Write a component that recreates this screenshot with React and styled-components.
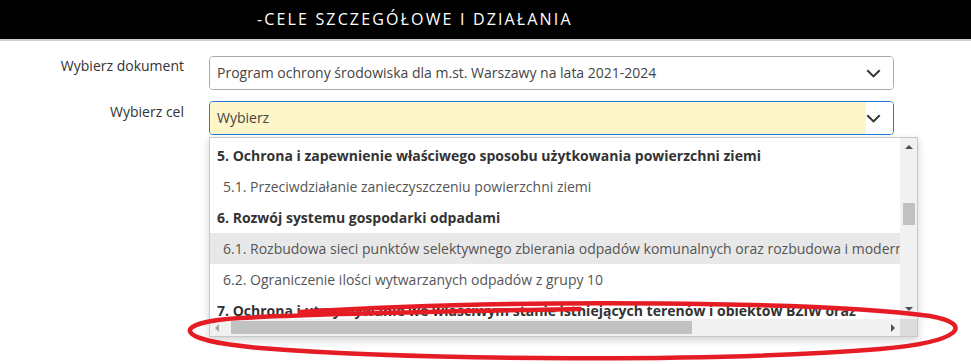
import React from 'react';
import styled, { createGlobalStyle } from 'styled-components';

const GlobalStyle = createGlobalStyle`
  body {
    margin: 0;
    background: #fff;
    font-family: "Open Sans", "DejaVu Sans", sans-serif;
  }
`;

const Page = styled.div`
  position: relative;
  width: 971px;
  height: 364px;
  overflow: hidden;
`;

const Header = styled.header`
  height: 39px;
  background: #000;
  border-bottom: 2px solid #d2d2d2;
  padding-left: 257px;
  display: flex;
  align-items: center;
`;

const Title = styled.h2`
  margin: 0 0 1px;
  color: #fff;
  font-size: 16px;
  font-weight: 400;
  letter-spacing: 2.15px;
`;

const Form = styled.div`
  display: grid;
  grid-template-columns: 184px 685px;
  column-gap: 25px;
  row-gap: 11px;
  padding-top: 15px;
`;

const Label = styled.label`
  justify-self: end;
  font-size: 14px;
  line-height: 20px;
  color: #333;
  padding-top: ${(p) => p.$offset || 0}px;
`;

const Field = styled.div`
  position: relative;
`;

const SelectBox = styled.div`
  height: 34px;
  box-sizing: border-box;
  display: flex;
  border: 1px solid ${(p) => (p.$open ? '#1f7bd3' : '#aaa')};
  border-radius: 4px;
  overflow: hidden;
  background: #fff;
`;

const Value = styled.div`
  flex: 1;
  padding-left: 7px;
  line-height: 32px;
  font-size: 14px;
  color: #444;
  background: ${(p) => (p.$highlight ? '#fdf6c9' : '#fff')};
  white-space: nowrap;
  overflow: hidden;
`;

const Arrow = styled.div`
  width: 27px;
  display: flex;
  align-items: center;
  justify-content: flex-start;
  background: #fff;
`;

const Chevron = () => (
  <svg width="15" height="9" viewBox="0 0 15 9">
    <path d="M1.3 1.3 L7.5 7.4 L13.7 1.3" fill="none" stroke="#333" strokeWidth="2" />
  </svg>
);

const Dropdown = styled.div`
  position: absolute;
  top: 36px;
  left: 0;
  width: 709px;
  height: 200px;
  box-sizing: border-box;
  border: 1px solid #c8c8c8;
  background: #fff;
  box-shadow: 0 3px 8px rgba(0, 0, 0, 0.18);
  display: grid;
  grid-template-columns: 1fr 17px;
  grid-template-rows: 1fr 17px;
  z-index: 2;
`;

const Options = styled.ul`
  list-style: none;
  margin: 0;
  padding: 2px 0 0;
  overflow: hidden;
`;

const Option = styled.li`
  height: 31px;
  line-height: 31px;
  font-size: 14px;
  white-space: nowrap;
  padding-left: ${(p) => (p.$group ? 7 : 13)}px;
  font-weight: ${(p) => (p.$group ? 700 : 400)};
  color: ${(p) => (p.$group ? '#333' : '#555')};
  background: ${(p) => (p.$active ? '#e8e8e8' : 'transparent')};
`;

const VTrack = styled.div`
  background: #f1f1f1;
  position: relative;
  display: flex;
  flex-direction: column;
  align-items: center;
  justify-content: space-between;
  padding: 6px 0 7px;
`;

const VThumb = styled.div`
  position: absolute;
  left: 3px;
  top: 65px;
  width: 12px;
  height: 22px;
  background: #c1c1c1;
`;

const HTrack = styled.div`
  background: #f1f1f1;
  display: flex;
  align-items: center;
  padding: 0 4px;
`;

const HThumb = styled.div`
  height: 13px;
  width: 461px;
  margin-left: 11px;
  background: #c1c1c1;
`;

const Corner = styled.div`
  background: #dcdcdc;
`;

const Tri = ({ dir }) => {
  const pts = {
    up: '0,5 4,1 8,5',
    down: '0,1 4,5 8,1',
    left: '5,0 1,4 5,8',
    right: '1,0 5,4 1,8',
  }[dir];
  const w = dir === 'up' || dir === 'down' ? 8 : 6;
  const h = dir === 'up' || dir === 'down' ? 6 : 8;
  return (
    <svg width={w} height={h} viewBox={`0 0 ${w} ${h}`}>
      <polygon points={pts} fill={dir === 'left' ? '#a3a3a3' : '#505050'} />
    </svg>
  );
};

const Spacer = styled.div`
  flex: 1;
`;

const Annotation = styled.svg`
  position: absolute;
  left: 0;
  top: 0;
  pointer-events: none;
  z-index: 5;
`;

const options = [
  { text: '5. Ochrona i zapewnienie właściwego sposobu użytkowania powierzchni ziemi', group: true },
  { text: '5.1. Przeciwdziałanie zanieczyszczeniu powierzchni ziemi' },
  { text: '6. Rozwój systemu gospodarki odpadami', group: true },
  { text: '6.1. Rozbudowa sieci punktów selektywnego zbierania odpadów komunalnych oraz rozbudowa i modernizacja instalacji', active: true },
  { text: '6.2. Ograniczenie ilości wytwarzanych odpadów z grupy 10' },
  { text: '7. Ochrona i utrzymywanie we właściwym stanie istniejących terenów i obiektów BZIW oraz', group: true },
];

export default function App() {
  return (
    <Page>
      <GlobalStyle />
      <Header>
        <Title>-CELE SZCZEGÓŁOWE I DZIAŁANIA</Title>
      </Header>
      <Form>
        <Label>Wybierz dokument</Label>
        <SelectBox>
          <Value>Program ochrony środowiska dla m.st. Warszawy na lata 2021-2024</Value>
          <Arrow>
            <Chevron />
          </Arrow>
        </SelectBox>
        <Label $offset={1}>Wybierz cel</Label>
        <Field>
          <SelectBox $open>
            <Value $highlight>Wybierz</Value>
            <Arrow>
              <Chevron />
            </Arrow>
          </SelectBox>
          <Dropdown>
            <Options>
              {options.map((o) => (
                <Option key={o.text} $group={o.group} $active={o.active}>
                  {o.text}
                </Option>
              ))}
            </Options>
            <VTrack>
              <Tri dir="up" />
              <VThumb />
              <Tri dir="down" />
            </VTrack>
            <HTrack>
              <Tri dir="left" />
              <HThumb />
              <Spacer />
              <Tri dir="right" />
            </HTrack>
            <Corner />
          </Dropdown>
        </Field>
      </Form>
      <Annotation width="971" height="364" viewBox="0 0 971 364">
        <g fill="none" stroke="#e51c24" strokeWidth="4.5" strokeLinecap="round">
          <path d="M300 312 C 520 298, 830 302, 930 316 C 975 324, 962 342, 880 349 C 720 362, 430 361, 260 348 C 168 340, 172 322, 240 318 C 330 313, 480 311, 580 309" />
        </g>
      </Annotation>
    </Page>
  );
}
